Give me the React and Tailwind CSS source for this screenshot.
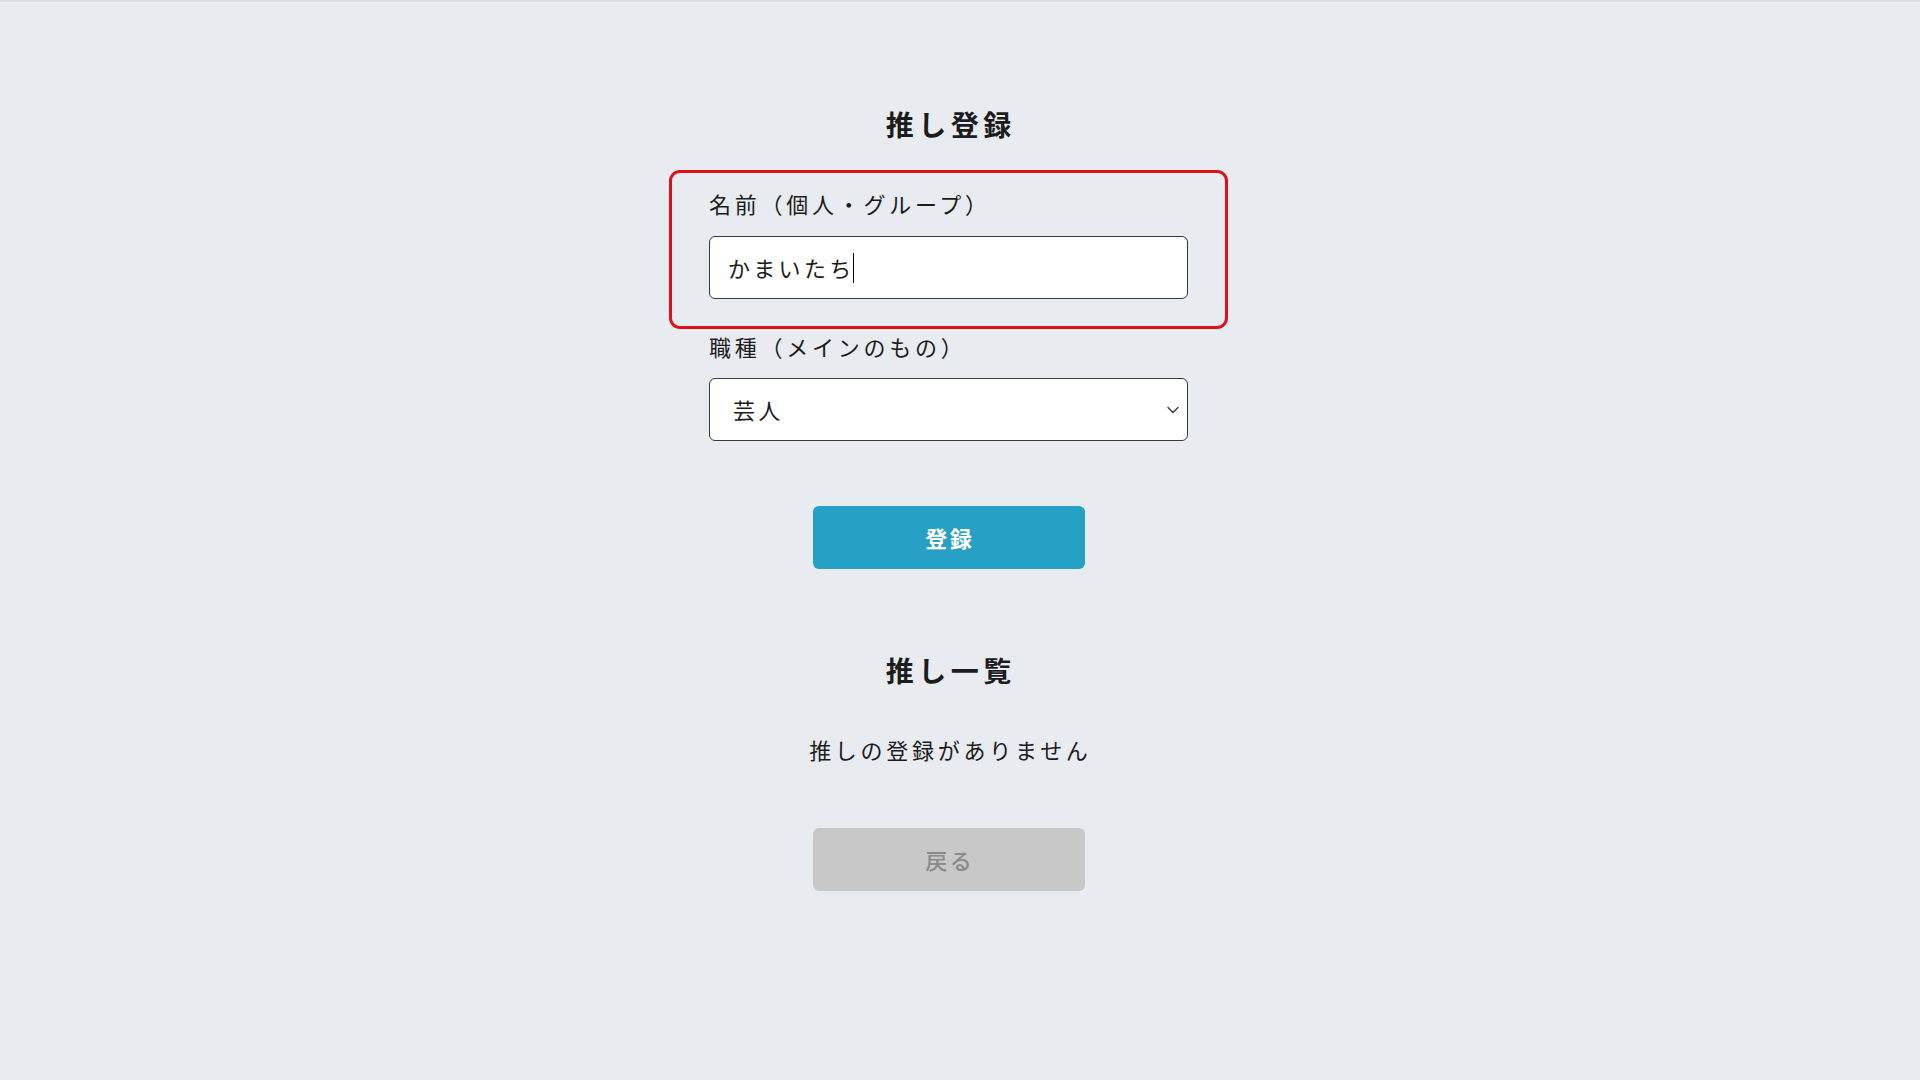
import React from "react";

export default function App() {
  const font = { fontFamily: '"Noto Sans CJK JP", "Noto Sans", sans-serif' };
  return (
    <div
      className="min-h-[1080px] w-full bg-[#e8ebf0] border-t-2 border-[#dadde2] text-[#1c1c1c]"
      style={font}
    >
      <div className="flex flex-col items-center pr-[23px] pt-[102px]">
        <h1 className="text-[28px] leading-[40px] font-bold tracking-[0.16em] pl-[0.16em]">推し登録</h1>

        <div className="mt-[26px] w-[479px] flex flex-col">
          <div className="-mx-[40px] border-[3px] border-[#e0101a] rounded-[11px] pl-[37px] pr-[37px] pt-[14px] pb-[27px]">
            <label className="block text-[22px] leading-[32px] tracking-[0.17em]">名前（個人・グループ）</label>
            <div className="mt-[17px] h-[63px] w-full bg-white border border-[#3a3a3a] rounded-[6px] flex items-center pl-[18px] text-[22px] tracking-[0.15em]">
              <span>かまいたち</span>
              <span className="inline-block w-px h-[30px] bg-black -ml-[2px]" />
            </div>
          </div>

          <label className="mt-[1px] block text-[22px] leading-[32px] tracking-[0.17em]">職種（メインのもの）</label>
          <div className="relative mt-[16px] h-[63px] w-full">
            <select
              defaultValue="芸人"
              className="appearance-none h-full w-full bg-white border border-[#3a3a3a] rounded-[6px] pl-[23px] text-[22px] tracking-[0.15em] outline-none"
              style={font}
            >
              <option>芸人</option>
              <option>歌手</option>
              <option>俳優</option>
            </select>
            <svg
              className="absolute right-[9px] top-1/2 -translate-y-1/2 pointer-events-none"
              width="12"
              height="8"
              viewBox="0 0 12 8"
              fill="none"
            >
              <path d="M1 1.5 L6 6.5 L11 1.5" stroke="#333" strokeWidth="1.3" strokeLinecap="round" strokeLinejoin="round" />
            </svg>
          </div>
        </div>

        <button className="mt-[65px] h-[63px] w-[272px] rounded-[6px] bg-[#27a0c6] text-white text-[22px] font-bold tracking-[0.12em] pl-[0.12em]">
          登録
        </button>

        <h2 className="mt-[81px] text-[28px] leading-[40px] font-bold tracking-[0.16em] pl-[0.16em]">推し一覧</h2>

        <p className="mt-[43px] text-[22px] leading-[32px] tracking-[0.17em] pl-[0.17em]">推しの登録がありません</p>

        <button className="mt-[63px] h-[63px] w-[272px] rounded-[6px] bg-[#c8c8c8] text-[#8a8a8a] text-[22px] font-medium tracking-[0.12em] pl-[0.12em]">
          戻る
        </button>
      </div>
    </div>
  );
}
